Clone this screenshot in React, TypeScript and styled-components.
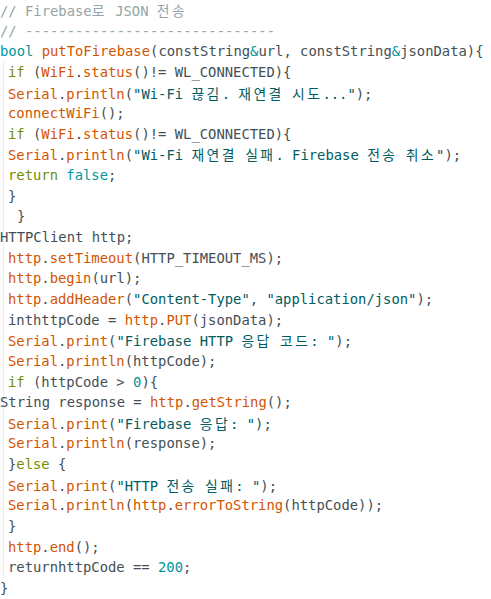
import React from "react";
import styled, { createGlobalStyle } from "styled-components";

const Global = createGlobalStyle`
  html, body { margin: 0; padding: 0; background: #ffffff; }
  body { overflow: hidden; }
`;

type Kind = "t" | "k" | "f" | "c" | "s" | "m";

const colors: Record<Kind, string> = {
  t: "#434f54",
  k: "#728e00",
  f: "#d35400",
  c: "#00979c",
  s: "#005c5f",
  m: "#95a5a6",
};

const Page = styled.div`
  width: 491px;
  height: 599px;
  background: #ffffff;
  font-family: "DejaVu Sans Mono", "Noto Sans CJK KR", monospace;
  font-size: 13.85px;
  color: #434f54;
  white-space: pre;
`;

const Guide = styled.div`
  margin-left: 3px;
  border-left: 1px solid #e9ecec;
`;

const Line = styled.div<{ $indent: number }>`
  height: 20.65px;
  line-height: 20.65px;
  margin-left: ${(p) => p.$indent}px;
`;

const Tok = styled.span<{ $k: Kind }>`
  color: ${(p) => colors[p.$k]};
`;

const Hangul = styled.span`
  font-family: "Noto Sans CJK KR", sans-serif;
  letter-spacing: 2.4px;
`;

type Seg = [Kind, string];

const renderText = (s: string) => {
  const parts = s.split(/([\uAC00-\uD7A3]+)/);
  return parts.map((p, i) =>
    /[\uAC00-\uD7A3]/.test(p) ? <Hangul key={i}>{p}</Hangul> : <React.Fragment key={i}>{p}</React.Fragment>
  );
};

const CodeLine = ({ indent, segs }: { indent: number; segs: Seg[] }) => (
  <Line $indent={indent}>
    {segs.map(([k, s], i) => (
      <Tok key={i} $k={k}>
        {renderText(s)}
      </Tok>
    ))}
  </Line>
);

const top: { i: number; s: Seg[] }[] = [
  { i: 0, s: [["m", "// Firebase로 JSON 전송"]] },
  { i: 0, s: [["m", "// ------------------------------"]] },
  {
    i: 0,
    s: [
      ["c", "bool"],
      ["t", " "],
      ["f", "putToFirebase"],
      ["t", "(constString"],
      ["c", "&"],
      ["t", "url, constString"],
      ["c", "&"],
      ["t", "jsonData){"],
    ],
  },
];

// offsets relative to the guide (guide sits at x=3, width 1)
const B = 4;
const body: { i: number; s: Seg[] }[] = [
  { i: B, s: [["k", "if"], ["t", " ("], ["f", "WiFi"], ["t", "."], ["f", "status"], ["t", "()!= WL_CONNECTED){"]] },
  { i: B, s: [["f", "Serial"], ["t", "."], ["f", "println"], ["t", "("], ["s", "\"Wi-Fi 끊김. 재연결 시도...\""], ["t", ");"]] },
  { i: B, s: [["f", "connectWiFi"], ["t", "();"]] },
  { i: B, s: [["k", "if"], ["t", " ("], ["f", "WiFi"], ["t", "."], ["f", "status"], ["t", "()!= WL_CONNECTED){"]] },
  { i: B, s: [["f", "Serial"], ["t", "."], ["f", "println"], ["t", "("], ["s", "\"Wi-Fi 재연결 실패. Firebase 전송 취소\""], ["t", ");"]] },
  { i: B, s: [["k", "return"], ["t", " "], ["c", "false"], ["t", ";"]] },
  { i: B, s: [["t", "}"]] },
  { i: B + 9, s: [["t", "}"]] },
  { i: -4, s: [["t", "HTTPClient http;"]] },
  { i: B, s: [["f", "http"], ["t", "."], ["f", "setTimeout"], ["t", "(HTTP_TIMEOUT_MS);"]] },
  { i: B, s: [["f", "http"], ["t", "."], ["f", "begin"], ["t", "(url);"]] },
  { i: B, s: [["f", "http"], ["t", "."], ["f", "addHeader"], ["t", "("], ["s", "\"Content-Type\""], ["t", ", "], ["s", "\"application/json\""], ["t", ");"]] },
  { i: B, s: [["t", "inthttpCode = "], ["f", "http"], ["t", "."], ["f", "PUT"], ["t", "(jsonData);"]] },
  { i: B, s: [["f", "Serial"], ["t", "."], ["f", "print"], ["t", "("], ["s", "\"Firebase HTTP 응답 코드: \""], ["t", ");"]] },
  { i: B, s: [["f", "Serial"], ["t", "."], ["f", "println"], ["t", "(httpCode);"]] },
  { i: B, s: [["k", "if"], ["t", " (httpCode > "], ["c", "0"], ["t", "){"]] },
  { i: -4, s: [["t", "String response = "], ["f", "http"], ["t", "."], ["f", "getString"], ["t", "();"]] },
  { i: B, s: [["f", "Serial"], ["t", "."], ["f", "print"], ["t", "("], ["s", "\"Firebase 응답: \""], ["t", ");"]] },
  { i: B, s: [["f", "Serial"], ["t", "."], ["f", "println"], ["t", "(response);"]] },
  { i: B, s: [["t", "}"], ["k", "else"], ["t", " {"]] },
  { i: B, s: [["f", "Serial"], ["t", "."], ["f", "print"], ["t", "("], ["s", "\"HTTP 전송 실패: \""], ["t", ");"]] },
  { i: B, s: [["f", "Serial"], ["t", "."], ["f", "println"], ["t", "("], ["f", "http"], ["t", "."], ["f", "errorToString"], ["t", "(httpCode));"]] },
  { i: B, s: [["t", "}"]] },
  { i: B, s: [["f", "http"], ["t", "."], ["f", "end"], ["t", "();"]] },
  { i: B, s: [["t", "returnhttpCode == "], ["c", "200"], ["t", ";"]] },
];

const bottom: { i: number; s: Seg[] }[] = [{ i: 0, s: [["t", "}"]] }];

export default function App() {
  return (
    <>
      <Global />
      <Page>
        {top.map((l, n) => (
          <CodeLine key={"t" + n} indent={l.i} segs={l.s} />
        ))}
        <Guide>
          {body.map((l, n) => (
            <CodeLine key={"b" + n} indent={l.i} segs={l.s} />
          ))}
        </Guide>
        {bottom.map((l, n) => (
          <CodeLine key={"e" + n} indent={l.i} segs={l.s} />
        ))}
      </Page>
    </>
  );
}
